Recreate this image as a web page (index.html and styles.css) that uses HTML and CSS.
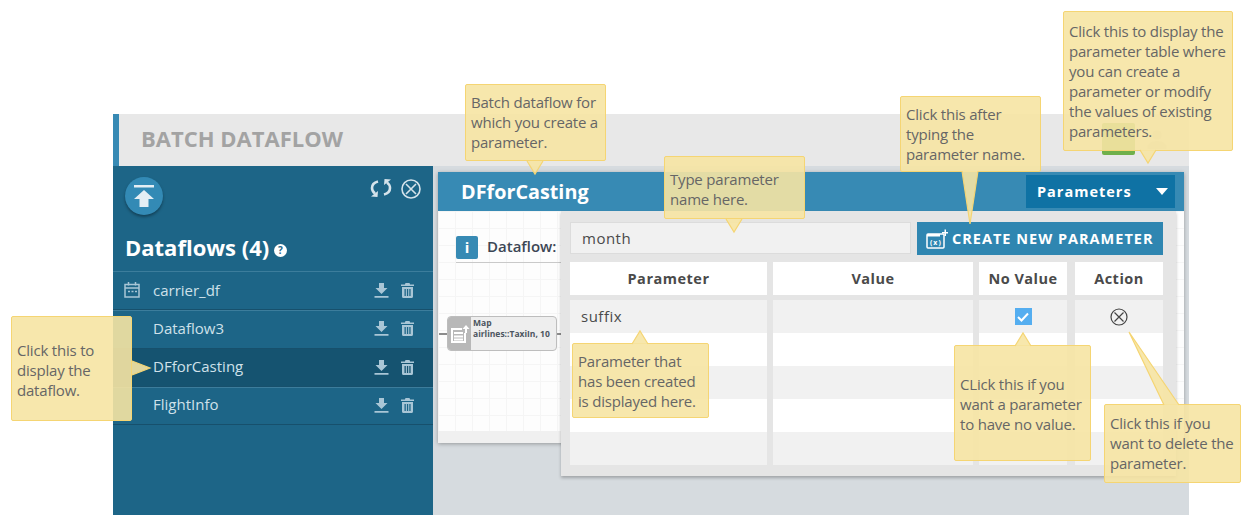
FILE: index.html
```html
<!DOCTYPE html>
<html lang="en">
<head>
    <meta charset="UTF-8">
    <meta name="viewport" content="width=device-width, initial-scale=1.0">
    <title>Batch Dataflow Parameters</title>
    <link rel="stylesheet" href="styles.css">
</head>
<body>
    <div class="app">
        <header class="app-header">
            <h1>BATCH DATAFLOW</h1>
            <div class="header-actions">
                <span class="green-btn"></span>
                <svg class="user-icon" viewBox="0 0 20 20"><circle cx="10" cy="6" r="5"/><path d="M0 20c0-6 4-8 10-8s10 2 10 8z"/></svg>
            </div>
        </header>
        <div class="app-body">
            <aside class="sidebar">
                <div class="sidebar-top">
                    <span class="upload-btn">
                        <svg viewBox="0 0 24 24" width="24" height="24"><path d="M2 1h20v2.500H2zM12 6l10 9h-5.500v8h-9v-8H2z" fill="#e4eef4"/></svg>
                    </span>
                    <div class="sidebar-tools">
                        <svg viewBox="0 0 22 18" width="22" height="18" fill="none" stroke="#d5e3eb" stroke-width="2.600"><path d="M8 2.500C4 3.500 2 6 2 9c0 2 1 4 3 5.500"/><path d="M14 15.500c4-1 6-3.500 6-6.500 0-2-1-4-3-5.500"/><path d="M1 17.500l6.500.5.500-6zM21 .5L14.500 0 14 6" fill="#d5e3eb" stroke="none"/></svg>
                        <svg viewBox="0 0 20 20" width="20" height="20" fill="none" stroke="#d5e3eb" stroke-width="1.600"><circle cx="10" cy="10" r="9"/><path d="M5 5l10 10M15 5L5 15"/></svg>
                    </div>
                </div>
                <h2 class="sidebar-title">Dataflows (4) <span class="help-dot">?</span></h2>
                <ul class="flow-list">
                    <li class="flow-row">
                        <svg class="flow-cal" viewBox="0 0 16 16" width="16" height="16" fill="none" stroke="#a9c6d6" stroke-width="1.500"><rect x="1" y="2.500" width="14" height="12.500"/><path d="M1 6h14M4.500 0v3.500M11.500 0v3.500M4 9.500h2M7.500 9.500h2M11 9.500h2"/></svg>
                        <span class="flow-name">carrier_df</span>
                        <svg class="flow-icon" viewBox="0 0 15 15" width="15" height="15"><path d="M5 0h5v5h3.500L7.500 11 1.500 5H5zM.5 13h14v1.800H.5z"/></svg>
                        <svg class="flow-icon" viewBox="0 0 13 15" width="13" height="15"><path d="M4.500 0h4l.6 1.500H13V3H0V1.500h3.900zM1 4h11v9.500c0 .8-.6 1.500-1.400 1.500H2.400C1.600 15 1 14.300 1 13.500zM3.500 6v7h1.300V6zm2.400 0v7h1.300V6zm2.400 0v7h1.300V6z" fill-rule="evenodd"/></svg>
                    </li>
                    <li class="flow-row">
                        <span class="flow-name">Dataflow3</span>
                        <svg class="flow-icon" viewBox="0 0 15 15" width="15" height="15"><path d="M5 0h5v5h3.500L7.500 11 1.500 5H5zM.5 13h14v1.800H.5z"/></svg>
                        <svg class="flow-icon" viewBox="0 0 13 15" width="13" height="15"><path d="M4.500 0h4l.6 1.500H13V3H0V1.500h3.900zM1 4h11v9.500c0 .8-.6 1.500-1.400 1.500H2.400C1.600 15 1 14.300 1 13.500zM3.500 6v7h1.300V6zm2.400 0v7h1.300V6zm2.400 0v7h1.300V6z" fill-rule="evenodd"/></svg>
                    </li>
                    <li class="flow-row selected">
                        <span class="flow-name">DFforCasting</span>
                        <svg class="flow-icon" viewBox="0 0 15 15" width="15" height="15"><path d="M5 0h5v5h3.500L7.500 11 1.500 5H5zM.5 13h14v1.800H.5z"/></svg>
                        <svg class="flow-icon" viewBox="0 0 13 15" width="13" height="15"><path d="M4.500 0h4l.6 1.500H13V3H0V1.500h3.900zM1 4h11v9.500c0 .8-.6 1.500-1.400 1.500H2.400C1.600 15 1 14.300 1 13.500zM3.500 6v7h1.300V6zm2.400 0v7h1.300V6zm2.400 0v7h1.300V6z" fill-rule="evenodd"/></svg>
                    </li>
                    <li class="flow-row">
                        <span class="flow-name">FlightInfo</span>
                        <svg class="flow-icon" viewBox="0 0 15 15" width="15" height="15"><path d="M5 0h5v5h3.500L7.500 11 1.500 5H5zM.5 13h14v1.800H.5z"/></svg>
                        <svg class="flow-icon" viewBox="0 0 13 15" width="13" height="15"><path d="M4.500 0h4l.6 1.500H13V3H0V1.500h3.900zM1 4h11v9.500c0 .8-.6 1.500-1.400 1.500H2.400C1.600 15 1 14.300 1 13.500zM3.500 6v7h1.300V6zm2.400 0v7h1.300V6zm2.400 0v7h1.300V6z" fill-rule="evenodd"/></svg>
                    </li>
                </ul>
            </aside>
            <main class="main">
                <section class="panel">
                    <div class="panel-head">
                        <h3>DFforCasting</h3>
                        <div class="param-toggle">
                            <span>Parameters</span>
                            <span class="caret"></span>
                        </div>
                    </div>
                    <div class="panel-body">
                        <div class="canvas">
                            <div class="canvas-title">
                                <span class="info-box">i</span>
                                <span>Dataflow:</span>
                            </div>
                            <div class="node-line">
                                <span class="stub"></span>
                                <div class="node">
                                    <span class="node-icon">
                                        <svg viewBox="0 0 20 18" width="20" height="18" fill="none" stroke="#fff" stroke-width="2"><path d="M12 4H2v13h13V8M4 8h9M4 11.500h9M4 14.500h9"/><path d="M16 0l3.500 4h-2.500v4h-2V4h-2.500z" fill="#fff" stroke="none"/></svg>
                                    </span>
                                    <span class="node-text">Map<br>airlines::TaxiIn, 10</span>
                                </div>
                                <span class="stub"></span>
                            </div>
                        </div>
                        <div class="canvas-foot"></div>
                        <div class="param-box">
                            <div class="param-form">
                                <div class="param-input">month</div>
                                <div class="create-btn">
                                    <svg viewBox="0 0 22 20" width="22" height="20"><rect x="1" y="5" width="17" height="14" rx="1" fill="none" stroke="#fff" stroke-width="1.500"/><path d="M1 5h13v2.500H1z" fill="#fff"/><path d="M16 3h2.500V.5h1.500V3h2v1.500h-2V7h-1.500V4.500H16z" fill="#fff"/><text x="4" y="16" class="fx-text">(x)</text></svg>
                                    <span>CREATE NEW PARAMETER</span>
                                </div>
                            </div>
                            <div class="param-table">
                                <div class="th">Parameter</div>
                                <div class="th">Value</div>
                                <div class="th">No Value</div>
                                <div class="th">Action</div>

                                <div class="td shade name-cell">suffix</div>
                                <div class="td shade"></div>
                                <div class="td shade"><span class="check"><svg viewBox="0 0 12 10" width="12" height="10" fill="none" stroke="#fff" stroke-width="2"><path d="M1 5l3.500 3.500L11 1.500"/></svg></span></div>
                                <div class="td shade"><svg viewBox="0 0 18 18" width="18" height="18" fill="none" stroke="#444" stroke-width="1.200"><circle cx="9" cy="9" r="8"/><path d="M4.500 4.500l9 9M13.500 4.500l-9 9"/></svg></div>

                                <div class="td"></div><div class="td"></div><div class="td"></div><div class="td"></div>
                                <div class="td shade"></div><div class="td shade"></div><div class="td shade"></div><div class="td shade"></div>
                                <div class="td"></div><div class="td"></div><div class="td"></div><div class="td"></div>
                                <div class="td shade"></div><div class="td shade"></div><div class="td shade"></div><div class="td shade"></div>
                            </div>
                        </div>
                    </div>
                </section>
            </main>
        </div>
    </div>

    <!-- yellow help callouts lying over the screen -->
    <div class="callout c-open">
        Click this to display the dataflow.
        <svg class="tail" viewBox="0 0 18 14" width="18" height="14" style="left:120px;top:44px"><polygon class="tail-fill" points="0,0 18,7 0,14"/><polyline class="tail-line" points="0,0 18,7 0,14"/></svg>
    </div>
    <div class="callout c-batch">
        Batch dataflow for which you create a parameter.
        <svg class="tail" viewBox="0 0 16 13" width="16" height="13" style="left:61px;top:76px"><polygon class="tail-fill" points="0,0 8,13 16,0"/><polyline class="tail-line" points="0,0 8,13 16,0"/></svg>
    </div>
    <div class="callout c-type">
        Type parameter name here.
        <svg class="tail" viewBox="0 0 16 13" width="16" height="13" style="left:61px;top:62px"><polygon class="tail-fill" points="0,0 8,13 16,0"/><polyline class="tail-line" points="0,0 8,13 16,0"/></svg>
    </div>
    <div class="callout c-create">
        Click this after typing the parameter name.
        <svg class="tail" viewBox="0 0 16 53" width="16" height="53" style="left:61px;top:74px"><polygon class="tail-fill" points="0,0 8,53 16,0"/><polyline class="tail-line" points="0,0 8,53 16,0"/></svg>
    </div>
    <div class="callout c-table">
        Click this to display the parameter table where you can create a parameter or modify the values of existing parameters.
        <svg class="tail" viewBox="0 0 16 13" width="16" height="13" style="left:76px;top:138px"><polygon class="tail-fill" points="0,0 8,13 16,0"/><polyline class="tail-line" points="0,0 8,13 16,0"/></svg>
    </div>
    <div class="callout c-created">
        Parameter that has been created is displayed here.
        <svg class="tail" viewBox="0 0 16 13" width="16" height="13" style="left:59px;top:-13px"><polygon class="tail-fill" points="0,13 8,0 16,13"/><polyline class="tail-line" points="0,13 8,0 16,13"/></svg>
    </div>
    <div class="callout c-novalue">
        CLick this if you want a parameter to have no value.
        <svg class="tail" viewBox="0 0 16 13" width="16" height="13" style="left:60px;top:-13px"><polygon class="tail-fill" points="0,13 8,0 16,13"/><polyline class="tail-line" points="0,13 8,0 16,13"/></svg>
    </div>
    <div class="callout c-delete">
        Click this if you want to delete the parameter.
        <svg class="tail" viewBox="0 0 52 73" width="52" height="73" style="left:23px;top:-73px"><polygon class="tail-fill" points="36,73 1,0 51,73"/><polyline class="tail-line" points="36,73 1,0 51,73"/></svg>
    </div>
</body>
</html>
```

FILE: styles.css
```css
* {
    box-sizing: border-box;
}
html, body {
    height: 100%;
}
body {
    margin: 0;
    overflow: hidden;
    position: relative;
    background-color: #fff;
    font-family: 'Open Sans', sans-serif;
    color: #4a4a4a;
}
.app {
    width: 1076px;
    height: 401px;
    margin: 114px 0 0 113px;
    display: flex;
    flex-direction: column;
    background-color: #d6dbdf;
}
.app-header {
    height: 52px;
    padding-left: 22px;
    display: flex;
    align-items: center;
    justify-content: space-between;
    background-color: #e8e8e8;
    border-left: 6px solid #378ab4;
}
.app-header h1 {
    margin: -4px 0 0;
    font-size: 22px;
    font-weight: 700;
    color: #a3a3a3;
}
.header-actions {
    display: flex;
    align-items: center;
    gap: 12px;
    padding-right: 22px;
    margin-top: -2px;
}
.green-btn {
    width: 33px;
    height: 32px;
    border-radius: 2px;
    background-color: #6fb04a;
}
.user-icon {
    width: 20px;
    height: 20px;
    fill: #d8d8d8;
}
.app-body {
    flex: 1;
    display: flex;
    min-height: 0;
}

/* left list of dataflows */
.sidebar {
    width: 320px;
    background-color: #1d6587;
    color: #fff;
}
.sidebar-top {
    height: 58px;
    padding: 11px 12px 0 12px;
    display: flex;
    justify-content: space-between;
    align-items: flex-start;
}
.upload-btn {
    width: 38px;
    height: 38px;
    display: flex;
    align-items: center;
    justify-content: center;
    border-radius: 50%;
    background-color: #338ab5;
    box-shadow: 0 2px 3px rgba(0, 0, 0, 0.35);
}
.sidebar-tools {
    display: flex;
    gap: 9px;
    margin-top: 2px;
}
.sidebar-title {
    margin: 9px 0 0 12px;
    height: 38px;
    font-size: 22px;
    line-height: 29px;
    font-weight: 700;
}
.help-dot {
    display: inline-block;
    width: 13px;
    height: 13px;
    margin-left: -1px;
    border-radius: 50%;
    background-color: #fff;
    color: #1d6587;
    font-size: 10px;
    line-height: 13px;
    text-align: center;
    vertical-align: 2px;
}
.flow-list {
    list-style: none;
    margin: 0;
    padding: 0;
    border-top: 1px solid #3c7d9c;
}
.flow-row {
    height: 38.250px;
    padding: 0 19px 0 40px;
    position: relative;
    display: flex;
    align-items: center;
    gap: 12px;
    border-bottom: 1px solid #17506c;
    box-shadow: 0 1px 0 #3c7d9c;
}
.flow-row:last-child {
    box-shadow: none;
}
.flow-row.selected {
    background-color: #155370;
}
.flow-cal {
    position: absolute;
    left: 11px;
    top: 10px;
}
.flow-name {
    flex: 1;
    padding-bottom: 2px;
    font-size: 15px;
    color: #cfe1ea;
}
.flow-icon {
    fill: #a9c6d6;
}

/* main panel */
.main {
    flex: 1;
    padding: 6px 5px 0;
}
.panel {
    position: relative;
    box-shadow: 0 1px 4px rgba(0, 0, 0, 0.3);
}
.panel-head {
    height: 39px;
    padding: 3px 9px 3px 23px;
    display: flex;
    align-items: center;
    justify-content: space-between;
    background-color: #378ab4;
}
.panel-head h3 {
    margin: 0;
    font-size: 19.800px;
    font-weight: 700;
    color: #fff;
}
.param-toggle {
    width: 149px;
    height: 33px;
    padding: 0 7px 0 11px;
    display: flex;
    align-items: center;
    justify-content: space-between;
    background-color: #0f72a4;
    color: #fff;
    font-size: 14.500px;
    font-weight: 700;
    letter-spacing: 1px;
}
.caret {
    border-left: 6px solid transparent;
    border-right: 6px solid transparent;
    border-top: 7px solid #fff;
}
.panel-body {
    height: 232px;
    position: relative;
    display: flex;
    flex-direction: column;
    background-color: #fff;
}
.canvas {
    flex: 1;
    padding: 25px 0 0 18px;
    background-color: #fdfdfd;
    background-image:
        linear-gradient(#f5f5f5 1px, transparent 1px),
        linear-gradient(90deg, #f5f5f5 1px, transparent 1px);
    background-size: 17px 17px;
}
.canvas-title {
    width: 105px;
    height: 27px;
    display: flex;
    align-items: flex-start;
    gap: 9px;
    border-bottom: 1px solid #c9c9c9;
    font-size: 15px;
    font-weight: 600;
    white-space: nowrap;
    color: #3c4654;
}
.info-box {
    width: 22px;
    height: 23px;
    flex-shrink: 0;
    border-radius: 2px;
    background-color: #378ab4;
    color: #fff;
    font-weight: 700;
    line-height: 23px;
    text-align: center;
}
.node-line {
    margin: 53px 0 0 -17px;
    display: flex;
    align-items: center;
}
.stub {
    width: 8px;
    height: 2px;
    background-color: #8c8c8c;
}
.node {
    width: 110px;
    height: 35px;
    flex-shrink: 0;
    display: flex;
    overflow: hidden;
    border: 1px solid #bdbdbd;
    border-radius: 4px;
    background-color: #eee;
}
.node-icon {
    width: 23px;
    display: flex;
    align-items: center;
    justify-content: center;
    background-color: #b8b8b8;
}
.node-text {
    padding: 0 0 0 2px;
    font-size: 8.500px;
    line-height: 11px;
    font-weight: 700;
    white-space: nowrap;
    color: #4c5560;
}
.canvas-foot {
    height: 12px;
    background-color: #f0f0f0;
}

/* parameter table, opens over the canvas */
.param-box {
    position: absolute;
    left: 123px;
    top: 0;
    width: 615px;
    height: 265px;
    padding: 11px 13px 11px 9px;
    background-color: #e5e5e5;
    box-shadow: 0 2px 3px rgba(0, 0, 0, 0.25);
}
.param-form {
    display: flex;
    gap: 6px;
    height: 33px;
    margin-bottom: 7px;
}
.param-input {
    width: 341px;
    height: 32px;
    padding-left: 11px;
    border: 1px solid #dcdcdc;
    background-color: #f1f1f1;
    font-size: 15px;
    font-weight: 500;
    letter-spacing: 0.5px;
    line-height: 31px;
}
.create-btn {
    flex: 1;
    padding-left: 9px;
    display: flex;
    align-items: center;
    gap: 4px;
    background-color: #2f86b1;
    color: #fff;
    font-size: 14.500px;
    font-weight: 700;
    letter-spacing: 1px;
    white-space: nowrap;
}
.fx-text {
    font-family: 'Open Sans', sans-serif;
    font-size: 7px;
    font-weight: 700;
    fill: #fff;
}
.param-table {
    display: grid;
    grid-template-columns: 197px 200px 88px 90px;
    grid-template-rows: 33px repeat(5, 33px);
    column-gap: 6px;
}
.param-table > :nth-child(4n) {
    margin-left: 2px;
}
.th {
    margin-bottom: 5px;
    height: 33px;
    display: flex;
    align-items: center;
    justify-content: center;
    background-color: #fff;
    font-size: 14.500px;
    font-weight: 700;
    letter-spacing: 0.5px;
}
.td {
    height: 33px;
    display: flex;
    align-items: center;
    justify-content: center;
    background-color: #fff;
    position: relative;
    top: 5px;
}
.td.shade {
    background-color: #f1f1f1;
}
.td.name-cell {
    justify-content: flex-start;
    padding: 0 0 1px 11px;
    font-size: 15px;
    font-weight: 500;
    letter-spacing: 0.5px;
}
.check {
    width: 17px;
    height: 17px;
    display: flex;
    align-items: center;
    justify-content: center;
    background-color: #55aef0;
}

/* callouts */
.callout {
    position: absolute;
    padding: 7px 5px 6px;
    border: 1.500px solid #f5d573;
    border-radius: 2px;
    background-color: rgba(246, 228, 163, 0.9);
    font-size: 15px;
    line-height: 20px;
    letter-spacing: -0.2px;
    color: #666;
}
.tail {
    position: absolute;
    overflow: visible;
}
.tail-fill {
    fill: rgba(246, 228, 163, 0.9);
}
.tail-line {
    fill: none;
    stroke: #f5d573;
    stroke-width: 1.200;
}
.c-open {
    left: 11px;
    top: 316px;
    width: 121px;
    height: 105px;
    padding-top: 8px;
    display: flex;
    align-items: center;
}
.c-batch {
    left: 465px;
    top: 84px;
    width: 141px;
    height: 77px;
}
.c-type {
    left: 664px;
    top: 156px;
    width: 141px;
    height: 63px;
    padding-top: 12px;
}
.c-create {
    left: 900px;
    top: 96px;
    width: 141px;
    height: 76px;
}
.c-table {
    left: 1063px;
    top: 11px;
    width: 170px;
    height: 140px;
    padding-top: 9px;
}
.c-created {
    left: 572px;
    top: 343px;
    width: 137px;
    height: 75px;
}
.c-novalue {
    left: 954px;
    top: 345px;
    width: 137px;
    height: 116px;
    padding-top: 28px;
}
.c-delete {
    left: 1104px;
    top: 404px;
    width: 137px;
    height: 79px;
    padding-top: 8px;
}
```
